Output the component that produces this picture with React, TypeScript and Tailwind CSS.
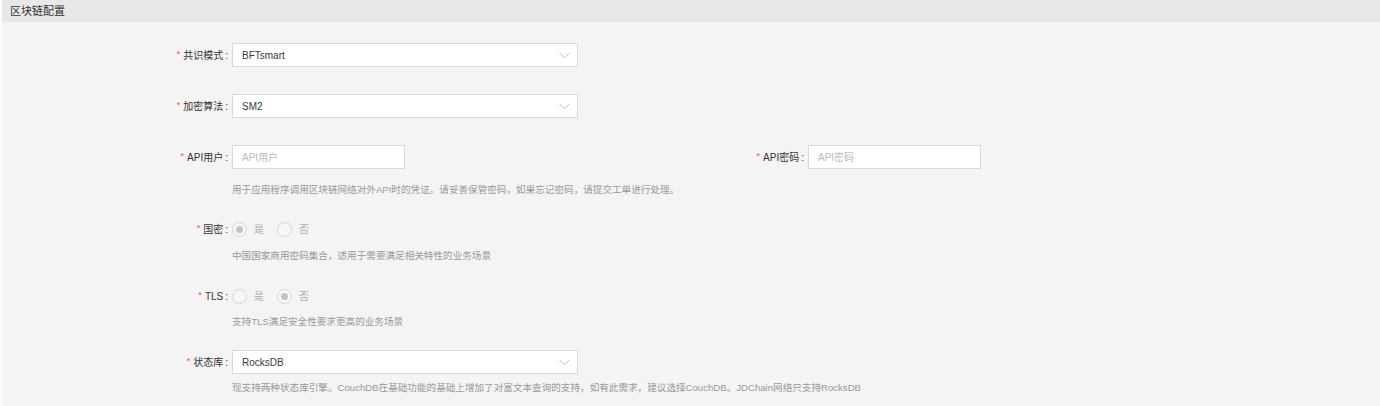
import React from 'react';

const FONT = '"Liberation Sans", "Noto Sans CJK SC", sans-serif';

function Label({ text }: { text: string }) {
  return (
    <div className="flex w-[230px] shrink-0 items-center justify-end pr-[4px] text-[10px] text-[#333]">
      <span className="mr-[3px] text-[9px] text-[#f04864]">*</span>
      <span>{text}</span>
      <span className="ml-[2px]">:</span>
    </div>
  );
}

function Chevron() {
  return (
    <svg width="11" height="7" viewBox="0 0 11 7" className="text-[#bdbdbd]">
      <path d="M0.5 0.8 L5.5 5.8 L10.5 0.8" fill="none" stroke="currentColor" strokeWidth="1" />
    </svg>
  );
}

function Select({ value }: { value: string }) {
  return (
    <div className="flex h-[24px] w-[346px] items-center justify-between border border-[#dadada] bg-white pl-[9px] pr-[7px] text-[10px] text-[#3a3a3a]">
      <span>{value}</span>
      <Chevron />
    </div>
  );
}

function TextInput({ placeholder }: { placeholder: string }) {
  return (
    <div className="flex h-[24px] w-[173px] items-center border border-[#dadada] bg-white pl-[9px] text-[10px] text-[#bcbcbc]">
      {placeholder}
    </div>
  );
}

function Radio({ checked, label }: { checked: boolean; label: string }) {
  return (
    <div className="flex items-center">
      <span className="flex h-[15px] w-[15px] items-center justify-center rounded-full border border-[#d6d6d6] bg-[#f7f7f7]">
        {checked && <span className="h-[7px] w-[7px] rounded-full bg-[#c4c4c4]" />}
      </span>
      <span className="ml-[7px] text-[10px] text-[#b0b0b0]">{label}</span>
    </div>
  );
}

function Help({ children, className = '' }: { children: React.ReactNode; className?: string }) {
  return (
    <div className={`pl-[230px] text-[9.6px] leading-[14px] text-[#999] ${className}`}>{children}</div>
  );
}

export default function App() {
  return (
    <div className="h-[406px] w-[1380px] overflow-hidden border-l-[2px] border-[#fbfbfb] bg-[#f4f4f4]" style={{ fontFamily: FONT }}>
      <div className="flex h-[22px] items-center bg-[#e8e8e8] pl-[8px] text-[11px] text-[#333]">区块链配置</div>

      <div className="mt-[21px] flex items-center">
        <Label text="共识模式" />
        <Select value="BFTsmart" />
      </div>

      <div className="mt-[27px] flex items-center">
        <Label text="加密算法" />
        <Select value="SM2" />
      </div>

      <div className="mt-[27px] flex items-center">
        <div className="flex w-[576px] items-center">
          <Label text="API用户" />
          <TextInput placeholder="API用户" />
        </div>
        <div className="flex items-center">
          <Label text="API密码" />
          <TextInput placeholder="API密码" />
        </div>
      </div>

      <Help className="mt-[14px]">用于应用程序调用区块链网络对外API时的凭证。请妥善保管密码，如果忘记密码，请提交工单进行处理。</Help>

      <div className="mt-[24px] flex h-[16px] items-center">
        <Label text="国密" />
        <div className="flex items-center gap-[13px]">
          <Radio checked label="是" />
          <Radio checked={false} label="否" />
        </div>
      </div>

      <Help className="mt-[12px]">中国国家商用密码集合，适用于需要满足相关特性的业务场景</Help>

      <div className="mt-[25px] flex h-[16px] items-center">
        <Label text="TLS" />
        <div className="flex items-center gap-[13px]">
          <Radio checked={false} label="是" />
          <Radio checked label="否" />
        </div>
      </div>

      <Help className="mt-[11px]">支持TLS满足安全性要求更高的业务场景</Help>

      <div className="mt-[21px] flex items-center">
        <Label text="状态库" />
        <Select value="RocksDB" />
      </div>

      <Help className="mt-[7px]">现支持两种状态库引擎。CouchDB在基础功能的基础上增加了对富文本查询的支持，如有此需求，建议选择CouchDB。JDChain网络只支持RocksDB</Help>
    </div>
  );
}
